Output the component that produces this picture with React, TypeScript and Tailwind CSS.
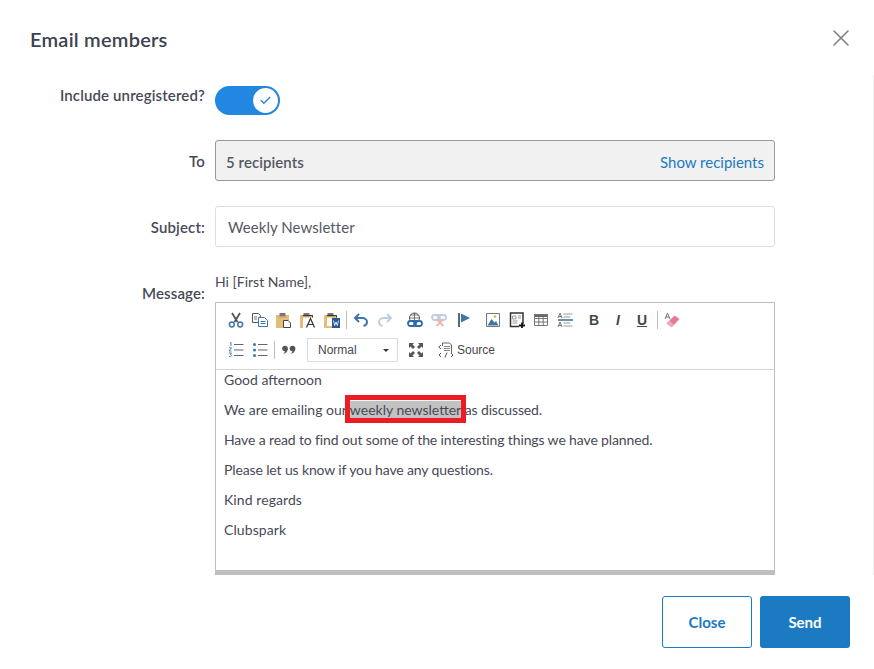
import React from "react";
import { X, Check } from "lucide-react";

const Cut = () => (
  <svg width="16" height="16" viewBox="0 0 16 16" fill="none">
    <path d="M4 1l5.500 9M12 1L6.500 10" stroke="#555" strokeWidth="1.800" />
    <circle cx="3.800" cy="12.500" r="2.400" stroke="#3f75a8" strokeWidth="1.500" />
    <circle cx="12.200" cy="12.500" r="2.400" stroke="#3f75a8" strokeWidth="1.500" />
  </svg>
);

const Copy = () => (
  <svg width="16" height="16" viewBox="0 0 16 16" fill="none">
    <path d="M.5 1.500h6l2 2v7h-8z" fill="#fff" stroke="#555" />
    <path d="M6.500 5.500h6l3 3v6h-9z" fill="#fff" stroke="#3f75a8" />
    <path d="M8.500 9.500h5M8.500 11.500h5" stroke="#3f75a8" />
    <path d="M2 5h3M2 7h3" stroke="#777" />
  </svg>
);

const Board = () => (
  <>
    <path d="M0 3h13v13H0z" fill="#e5bd7b" />
    <path d="M3.500 1h6v3.500h-6z" fill="#777" />
    <path d="M2 4.500h9v1H2z" fill="#c9a467" />
  </>
);

const Paste = () => (
  <svg width="16" height="16" viewBox="0 0 16 16" fill="none">
    <Board />
    <path d="M7.500 8.500h4.500l2.500 2.500v4.500h-7z" fill="#fff" stroke="#444" />
  </svg>
);

const PasteText = () => (
  <svg width="16" height="16" viewBox="0 0 16 16" fill="none">
    <Board />
    <path d="M3 5.500h10v10.500H3z" fill="#fff" />
    <path d="M3 3.500h9.500v2" stroke="#333" />
    <path d="M6.500 15.500L10.500 6.500 14.500 15.500M8 12.500h5" stroke="#333" strokeWidth="1.200" />
  </svg>
);

const PasteWord = () => (
  <svg width="16" height="16" viewBox="0 0 16 16" fill="none">
    <Board />
    <path d="M3 5.500h5v8.500H3z" fill="#fff" />
    <path d="M3 3.500h9.500v2" stroke="#333" />
    <path d="M8 6h8v10H8z" fill="#2b5797" />
    <path d="M9.500 8.500l1.200 5 1.300-3.500 1.300 3.500 1.200-5" stroke="#fff" strokeWidth=".8" />
  </svg>
);

const Undo = ({ color }: { color: string }) => (
  <svg width="16" height="16" viewBox="0 0 16 16" fill="none">
    <path d="M6 2L2 6l4 4" stroke={color} strokeWidth="2" />
    <path d="M3 6h6c3 0 5 2 5 4s-1.500 3.500-3.500 4" stroke={color} strokeWidth="2" />
  </svg>
);

const Redo = ({ color }: { color: string }) => (
  <svg width="16" height="16" viewBox="0 0 16 16" fill="none">
    <path d="M10 2l4 4-4 4" stroke={color} strokeWidth="2" />
    <path d="M13 6H7C4 6 2 8 2 10s1.500 3.500 3.500 4" stroke={color} strokeWidth="2" />
  </svg>
);

const LinkIcon = () => (
  <svg width="16" height="16" viewBox="0 0 16 16" fill="none">
    <circle cx="7.500" cy="6" r="5" stroke="#555" />
    <path d="M2.500 6h10M7.500 1v10M3.500 3h8M3.500 9h8" stroke="#555" strokeWidth=".8" />
    <rect x="1" y="9" width="8" height="5" rx="2.500" fill="#fff" stroke="#2d6ca8" strokeWidth="1.800" />
    <rect x="7" y="9" width="8" height="5" rx="2.500" stroke="#2d6ca8" strokeWidth="1.800" />
  </svg>
);

const Unlink = () => (
  <svg width="16" height="16" viewBox="0 0 16 16" fill="none">
    <rect x="1" y="3" width="8" height="5" rx="2.500" stroke="#bcd0e2" strokeWidth="1.800" />
    <rect x="7" y="3" width="8" height="5" rx="2.500" stroke="#bcd0e2" strokeWidth="1.800" />
    <path d="M5.500 7l7 7M12.500 7l-7 7" stroke="#f0b5a8" strokeWidth="1.800" />
  </svg>
);

const Flag = () => (
  <svg width="16" height="16" viewBox="0 0 16 16" fill="none">
    <path d="M2 1h2v14H2z" fill="#666" />
    <path d="M5 1.500L14 6l-9 4.500z" fill="#3f75a8" />
  </svg>
);

const ImageIcon = () => (
  <svg width="16" height="16" viewBox="0 0 16 16" fill="none">
    <path d="M1.500 1.500h13v13h-13z" fill="#fff" stroke="#777" />
    <path d="M2.500 13.500L6.500 7l3 3.500 1.500-1.500 2.500 4.500z" fill="#3f75a8" />
    <circle cx="10" cy="4.500" r="1.500" fill="#e5bd7b" />
  </svg>
);

const Template = () => (
  <svg width="16" height="16" viewBox="0 0 16 16" fill="none">
    <path d="M14 12V1H1.500v13.500H10" stroke="#333" strokeWidth="1.500" />
    <path d="M3.500 4h3.500v3H3.500zM3.500 9h5M3.500 11h5M9 4h3M9 6h3" stroke="#999" />
    <path d="M10 13.500h6M13 10.500v5.500" stroke="#111" strokeWidth="1.800" />
  </svg>
);

const TableIcon = () => (
  <svg width="16" height="16" viewBox="0 0 16 16" fill="none">
    <path d="M1 2h14v3H1z" fill="#666" />
    <path d="M1.500 2.500h13v11h-13zM1.500 6.500h13M1.500 10h13M5.800 5v8.500M10.200 5v8.500" stroke="#777" />
  </svg>
);

const Format = () => (
  <svg width="16" height="16" viewBox="0 0 16 16" fill="none">
    <path d="M1 6l2-5 2 5M1.700 4.500h2.600M1 15l2-5 2 5M1.700 13.500h2.600" stroke="#666" strokeWidth=".9" />
    <path d="M6.500 2h9M6.500 5h7M6.500 11h7M6.500 14h9" stroke="#999" />
    <path d="M1 8h15" stroke="#3f75a8" strokeWidth="1.600" />
  </svg>
);

const Eraser = () => (
  <svg width="16" height="16" viewBox="0 0 16 16" fill="none">
    <path d="M1 7l2.500-6L6 7M1.800 5h3.400" stroke="#666" strokeWidth=".9" />
    <path d="M2.500 11.500L10.500 3.500l5 3.500-7.500 8z" fill="#e8798f" />
    <path d="M2.500 11.500l3-3 4 4-2 3z" fill="#f3a9b8" />
  </svg>
);

const NumList = () => (
  <svg width="16" height="16" viewBox="0 0 16 16" fill="none">
    <path d="M6 2.500h9.500M6 8h9.500M6 13.500h9.500" stroke="#666" />
    <path d="M2 1l1-.5V4M1 5.800h2.500L1 9h2.500M1 11h2.500l-1 1.500c1.500 0 1.500 2.500-1.500 2" stroke="#3f75a8" strokeWidth=".9" />
  </svg>
);

const BulList = () => (
  <svg width="16" height="16" viewBox="0 0 16 16" fill="none">
    <path d="M6 2.500h9.500M6 8h9.500M6 13.500h9.500" stroke="#666" />
    <circle cx="2.500" cy="2.500" r="1.500" fill="#3f75a8" />
    <circle cx="2.500" cy="8" r="1.500" fill="#3f75a8" />
    <circle cx="2.500" cy="13.500" r="1.500" fill="#3f75a8" />
  </svg>
);

const Quote = () => (
  <svg width="16" height="16" viewBox="0 0 16 16" fill="none">
    <circle cx="4" cy="6.500" r="2.800" fill="#555" />
    <path d="M6.800 6.500c0 3-2 5-4.300 5.500 1-1.500 1.500-2.500 1.500-3.500z" fill="#555" />
    <circle cx="11.500" cy="6.500" r="2.800" fill="#555" />
    <path d="M14.300 6.500c0 3-2 5-4.300 5.500 1-1.500 1.500-2.500 1.500-3.500z" fill="#555" />
  </svg>
);

const Maximize = () => (
  <svg width="16" height="16" viewBox="0 0 16 16" fill="none">
    <path d="M1 1h5L4.500 2.500 7 5 5 7 2.500 4.500 1 6zM15 1v5l-1.500-1.500L11 7 9 5l2.500-2.500L10 1zM1 15v-5l1.500 1.500L5 9l2 2-2.500 2.500L6 15zM15 15h-5l1.500-1.500L9 11l2-2 2.500 2.500L15 10z" fill="#555" />
  </svg>
);

const SourceIcon = () => (
  <svg width="16" height="16" viewBox="0 0 16 16" fill="none">
    <path d="M4.500 1h7l2 2v8M4.500 1v3" stroke="#555" strokeWidth=".9" />
    <path d="M6 4.500h6M6 6.500h6M6 8.500h6" stroke="#777" strokeWidth=".9" />
    <path d="M3 3L.8 5 3 7M3 11l-2 2 2 2M13 11l2 2-2 2M9 10.500l-2 5" stroke="#444" strokeWidth=".9" />
  </svg>
);

const Btn = ({ children, className = "" }: { children: React.ReactNode; className?: string }) => (
  <span className={`flex h-6 w-6 items-center justify-center ${className}`}>{children}</span>
);

const TextBtn = ({ children, className = "" }: { children: React.ReactNode; className?: string }) => (
  <span className={`flex h-6 w-6 items-center justify-center font-['Liberation_Sans',sans-serif] text-[14px] text-[#474747] ${className}`}>
    {children}
  </span>
);

const Sep = ({ className = "ml-[2px] mr-px" }: { className?: string }) => (
  <span className={`h-[18px] w-px bg-[#bcbcbc] ${className}`} />
);

const Row = ({ label, children, className = "" }: { label: string; children: React.ReactNode; className?: string }) => (
  <div className={`flex ${className}`}>
    <div className="w-[205px] shrink-0 text-right text-[15px] font-semibold tracking-[0.14px] text-[#474a56]">{label}</div>
    <div className="ml-[10px] w-[560px]">{children}</div>
  </div>
);

export default function App() {
  return (
    <div className="relative flex h-[669px] w-[874px] flex-col overflow-hidden bg-white font-['Lato',sans-serif] text-[#474a56]">
      <div className="flex h-[75px] items-start justify-between pl-[30px] pr-[19px] pt-[25px]">
        <h1 className="text-[20px] font-semibold leading-[28px] tracking-[0.23px] text-[#3c4250]">Email members</h1>
        <X size={28} strokeWidth={1.3} className="-mt-px text-[#7f7f7f]" />
      </div>

      <div className="flex h-[500px] flex-col border-r border-[#f0f0f0]">
        <Row label="Include unregistered?" className="mt-[11px] h-[29px] leading-[19px]">
          <div className="relative h-[29px] w-[65px] rounded-full bg-[#2187e0]">
            <span className="absolute right-[2px] top-[2px] flex h-[25px] w-[25px] items-center justify-center rounded-full bg-white">
              <Check size={13} strokeWidth={2.5} className="text-[#2187e0]" />
            </span>
          </div>
        </Row>

        <Row label="To" className="mt-[25px] h-[41px] leading-[43px]">
          <div className="flex h-[41px] items-center justify-between rounded-[3px] border border-[#999] bg-[#f1f1f1] px-[10px] pt-[3px] text-[15px] leading-[20px]">
            <span className="font-semibold tracking-[0.06px] text-[#55585f]">5 recipients</span>
            <span className="text-[#1b7ac2]">Show recipients</span>
          </div>
        </Row>

        <Row label="Subject:" className="mt-[25px] h-[41px] leading-[43px]">
          <div className="flex h-[41px] items-center rounded-[3px] border border-[#dedede] px-3 pt-[1px] text-[15px] leading-[20px] tracking-[0.06px] text-[#55585f]">
            Weekly Newsletter
          </div>
        </Row>

        <Row label="Message:" className="mt-[25px] leading-[42px]">
          <div className="flex h-[20px] items-center text-[14px] leading-[20px] text-[#474a56]">Hi [First Name],</div>
          <div className="mt-[10px] flex h-[273px] flex-col border border-b-0 border-[#bfbfbf] leading-normal">
            <div className="flex h-[67px] shrink-0 flex-col gap-[6px] border-b border-[#d6d6d6] pl-2 pt-[5px]">
              <div className="flex items-center">
                <Btn><Cut /></Btn>
                <Btn><Copy /></Btn>
                <Btn><Paste /></Btn>
                <Btn><PasteText /></Btn>
                <Btn><PasteWord /></Btn>
                <Sep />
                <Btn className="ml-px"><Undo color="#3f75a8" /></Btn>
                <Btn><Redo color="#bcd0e2" /></Btn>
                <Btn className="ml-[6px]"><LinkIcon /></Btn>
                <Btn><Unlink /></Btn>
                <Btn className="ml-px"><Flag /></Btn>
                <Btn className="ml-[5px]"><ImageIcon /></Btn>
                <Btn><Template /></Btn>
                <Btn><TableIcon /></Btn>
                <Btn><Format /></Btn>
                <TextBtn className="ml-[5px] font-bold">B</TextBtn>
                <TextBtn className="font-bold italic text-[#666]">I</TextBtn>
                <TextBtn className="font-bold underline">U</TextBtn>
                <Sep className="ml-[3px] mr-[2px]" />
                <Btn><Eraser /></Btn>
              </div>
              <div className="flex items-center">
                <Btn><NumList /></Btn>
                <Btn><BulList /></Btn>
                <Sep />
                <Btn className="ml-px"><Quote /></Btn>
                <div className="ml-[6px] flex h-[24px] w-[91px] items-center justify-between border border-[#dcdcdc] pl-[10px] pr-[8px] font-['Liberation_Sans',sans-serif] text-[12px] text-[#484848]">
                  Normal
                  <span className="h-0 w-0 border-x-[3px] border-t-[3px] border-x-transparent border-t-[#333]" />
                </div>
                <Btn className="ml-[6px]"><Maximize /></Btn>
                <span className="ml-[10px] flex items-center font-['Liberation_Sans',sans-serif] text-[12px] text-[#484848]">
                  <SourceIcon />
                  <span className="ml-[3px]">Source</span>
                </span>
              </div>
            </div>
            <div className="flex flex-1 flex-col pl-2 text-[14px] leading-[20px] text-[#474a56]">
              <p>Good afternoon</p>
              <p className="mt-[10px]">
                We are emailing our{" "}
                <span className="relative bg-[#c2c2c2]">
                  weekly newsletter
                  <span className="absolute -inset-x-[5px] -bottom-[5px] -top-[6px] border-[5px] border-[#ed1c24]" />
                </span>{" "}
                <span className="tracking-[-0.15px]">as discussed.</span>
              </p>
              <p className="mt-[10px] tracking-[-0.125px]">Have a read to find out some of the interesting things we have planned.</p>
              <p className="mt-[10px] tracking-[-0.13px]">Please let us know if you have any questions.</p>
              <p className="mt-[10px] tracking-[0.08px]">Kind regards</p>
              <p className="mt-[10px] tracking-[0.1px]">Clubspark</p>
            </div>
            <div className="h-[5px] shrink-0 bg-[#bfbfbf]" />
          </div>
        </Row>
      </div>

      <div className="flex justify-end gap-2 pr-6 pt-[21px]">
        <button className="h-[52px] w-[90px] rounded-[3px] border border-[#1b7ac2] bg-white text-[15px] font-bold text-[#1b7ac2]">Close</button>
        <button className="h-[52px] w-[90px] rounded-[3px] bg-[#1b7ac2] text-[15px] font-bold text-white">Send</button>
      </div>
    </div>
  );
}
